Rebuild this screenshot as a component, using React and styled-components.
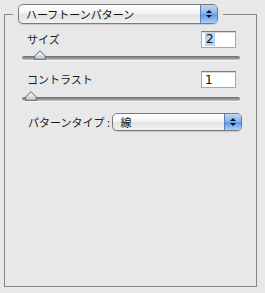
import styled, { createGlobalStyle } from "styled-components";

const GlobalStyle = createGlobalStyle`
  html, body {
    margin: 0;
    padding: 0;
    background: #e8e8e8;
  }
  body {
    font-family: "Noto Sans CJK JP", "Noto Sans", sans-serif;
    color: #1a1a1a;
  }
`;

const Page = styled.div`
  width: 265px;
  height: 293px;
  box-sizing: border-box;
  padding: 4px 8px 0 4px;
  background: #e8e8e8;
`;

const Group = styled.fieldset`
  margin: 0;
  padding: 0;
  width: 253px;
  height: 283px;
  box-sizing: border-box;
  border: 1px solid #858585;
  display: flex;
  flex-direction: column;
`;

const Legend = styled.legend`
  margin-left: 8px;
  padding: 0 5px;
  height: 20px;
`;

const Popup = styled.div`
  display: flex;
  width: ${(p) => p.width}px;
  height: ${(p) => p.height}px;
  box-sizing: border-box;
  border: 1px solid #7a7a7a;
  border-radius: 5px;
  overflow: hidden;
  background: linear-gradient(#ffffff 0%, #f4f4f4 45%, #e2e2e2 55%, #f2f2f2 100%);
  box-shadow: 0 1px 1px rgba(0, 0, 0, 0.15);
`;

const PopupText = styled.span`
  flex: 1;
  display: flex;
  align-items: center;
  padding-left: ${(p) => p.indent}px;
  font-size: 11px;
  line-height: 1;
  color: #111;
  white-space: nowrap;
`;

const ArrowBox = styled.div`
  width: 16px;
  display: flex;
  flex-direction: column;
  align-items: center;
  justify-content: center;
  gap: 2px;
  border-left: 1px solid #5d7fb5;
  background: linear-gradient(#bcd6f6 0%, #8ab6ee 45%, #5f9ae6 55%, #a9d0fb 100%);
`;

const Tri = styled.span`
  width: 0;
  height: 0;
  border-left: 3px solid transparent;
  border-right: 3px solid transparent;
  ${(p) =>
    p.down
      ? "border-top: 3px solid #111;"
      : "border-bottom: 3px solid #111;"}
`;

const Row = styled.div`
  display: flex;
  align-items: center;
  justify-content: space-between;
  height: 17px;
  margin-top: ${(p) => p.top}px;
  padding: 0 20px 0 22px;
`;

const Label = styled.span`
  font-size: 11px;
  line-height: 1;
  color: #1a1a1a;
  white-space: pre;
`;

const Field = styled.div`
  width: 35px;
  height: 17px;
  box-sizing: border-box;
  background: #fff;
  border: 1px solid #a9a9a9;
  border-top-color: #7d7d7d;
  box-shadow: inset 0 1px 0 #d8d8d8;
  display: flex;
  align-items: center;
  padding-left: 3px;
  font-family: "DejaVu Sans", sans-serif;
  font-size: 12px;
  color: #111;
`;

const Selected = styled.span`
  background: #b3d2f7;
  line-height: 13px;
  padding: 0 1px;
`;

const SliderRow = styled.div`
  height: 12px;
  margin-top: ${(p) => p.top}px;
  padding: 0 16px 0 17px;
  display: flex;
  align-items: center;
`;

const Track = styled.div`
  position: relative;
  flex: 1;
  height: 4px;
  border-radius: 2px;
  background: linear-gradient(#6a6a6a, #9a9a9a 60%, #c4c4c4);
  box-shadow: 0 1px 0 #f6f6f6;
`;

const Thumb = styled.svg`
  position: absolute;
  top: -6px;
  left: ${(p) => p.at}px;
`;

const SelectRow = styled.div`
  display: flex;
  align-items: center;
  margin-top: ${(p) => p.top}px;
  padding-left: 23px;
  gap: 0;
`;

function Slider({ top, x }) {
  return (
    <SliderRow top={top}>
      <Track>
        <Thumb at={x} width="12" height="10" viewBox="0 0 12 10">
          <defs>
            <linearGradient id={`g${x}`} x1="0" y1="0" x2="0" y2="1">
              <stop offset="0" stopColor="#ffffff" />
              <stop offset="1" stopColor="#b9c4d2" />
            </linearGradient>
          </defs>
          <path
            d="M6 0.7 L11.3 6 L11.3 9.3 L0.7 9.3 L0.7 6 Z"
            fill={`url(#g${x})`}
            stroke="#5f6670"
            strokeWidth="1"
            strokeLinejoin="round"
          />
        </Thumb>
      </Track>
    </SliderRow>
  );
}

export default function App() {
  return (
    <>
      <GlobalStyle />
      <Page>
        <Group>
          <Legend>
            <Popup width={200} height={20}>
              <PopupText indent={7}>ハーフトーンパターン</PopupText>
              <ArrowBox>
                <Tri />
                <Tri down />
              </ArrowBox>
            </Popup>
          </Legend>
          <Row top={7}>
            <Label>サイズ</Label>
            <Field>
              <Selected>2</Selected>
            </Field>
          </Row>
          <Slider top={4} x={12} />
          <Row top={7}>
            <Label>コントラスト</Label>
            <Field>1</Field>
          </Row>
          <Slider top={5} x={3} />
          <SelectRow top={8}>
            <Label>パターンタイプ : </Label>
            <Popup width={130} height={18}>
              <PopupText indent={7}>線</PopupText>
              <ArrowBox>
                <Tri />
                <Tri down />
              </ArrowBox>
            </Popup>
          </SelectRow>
        </Group>
      </Page>
    </>
  );
}
